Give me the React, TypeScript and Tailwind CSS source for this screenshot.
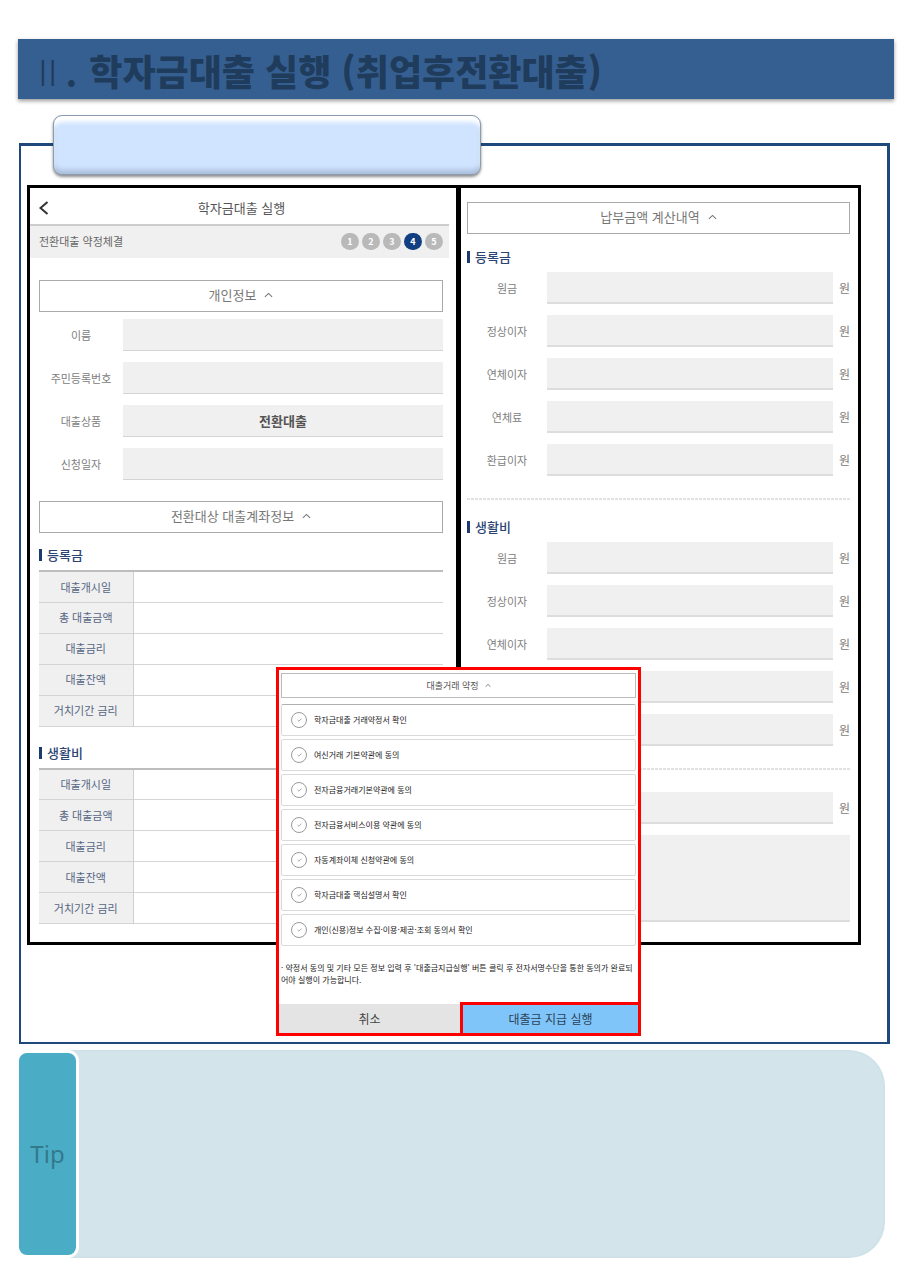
import type { ReactNode } from "react";

const profileFields = [
  { id: "name", label: "이름", value: "" },
  { id: "rrn", label: "주민등록번호", value: "" },
  { id: "product", label: "대출상품", value: "전환대출" },
  { id: "date", label: "신청일자", value: "" },
];

const accountRows = ["대출개시일", "총 대출금액", "대출금리", "대출잔액", "거치기간 금리"];
const amountRows = ["원금", "정상이자", "연체이자", "연체료", "환급이자"];

const agreements = [
  "학자금대출 거래약정서 확인",
  "여신거래 기본약관에 동의",
  "전자금융거래기본약관에 동의",
  "전자금융서비스이용 약관에 동의",
  "자동계좌이체 신청약관에 동의",
  "학자금대출 핵심설명서 확인",
  "개인(신용)정보 수집·이용·제공·조회 동의서 확인",
];

function Caret({ className }: { className: string }) {
  return (
    <svg viewBox="0 0 10 6" className={className} fill="none" stroke="currentColor" strokeWidth="1.2" aria-hidden="true">
      <path d="M1 5 5 1.2 9 5" />
    </svg>
  );
}

function SectionToggle({ children }: { children: ReactNode }) {
  return (
    <button
      type="button"
      className="flex h-8 w-full items-center justify-center gap-2 border border-[#aaaaaa] bg-white pb-[2px] text-[13px] text-[#777777]"
    >
      {children}
      <Caret className="h-[6px] w-[9px]" />
    </button>
  );
}

function SubTitle({ children }: { children: ReactNode }) {
  return (
    <h3 className="flex h-4 items-center gap-[5px] text-[13px] font-medium text-[#2b4474]">
      <span className="h-3 w-[3px] bg-[#1c3a70]" />
      {children}
    </h3>
  );
}

function DashedRule() {
  return (
    <hr className="mt-[22px] h-[2px] border-0 bg-[repeating-linear-gradient(90deg,#e2e2e2_0_3px,#ffffff_3px_4px)]" />
  );
}

function AccountTable({ title }: { title: string }) {
  return (
    <table aria-label={title} className="w-full border-collapse border-t-2 border-[#bdbdbd] text-[11px]">
      <tbody>
        {accountRows.map((row) => (
          <tr key={row} className="h-[31px] border-b border-[#d4d4d4]">
            <th scope="row" className="w-[94px] border-r border-[#cfcfcf] bg-[#f0f0f0] p-0 font-normal text-[#566683]">
              {row}
            </th>
            <td className="p-0" />
          </tr>
        ))}
      </tbody>
    </table>
  );
}

function AmountField({ id, label }: { id: string; label: string }) {
  return (
    <div className="flex h-8 items-center">
      <label htmlFor={id} className="w-20 shrink-0 text-center text-[11px] text-[#808080]">
        {label}
      </label>
      <input id={id} readOnly className="h-8 min-w-0 flex-1 border-b-2 border-[#dddddd] bg-[#f0f0f0] px-2 text-right outline-none" />
      <span className="w-[17px] shrink-0 text-right text-[12px] text-[#808080]">원</span>
    </div>
  );
}

function AmountGroup({ prefix }: { prefix: string }) {
  return (
    <div className="flex flex-col gap-[11px]">
      {amountRows.map((row, i) => (
        <AmountField key={row} id={`${prefix}-${i}`} label={row} />
      ))}
    </div>
  );
}

function ContractScreen() {
  return (
    <section className="border-y-[3px] border-r-2 border-l-[3px] border-black bg-white pb-[18px]">
      <div className="pr-[7px]">
        <header className="flex h-[38px] items-center border-b-2 border-[#cccccc] px-[9px] pt-[3px]">
          <button type="button" aria-label="뒤로" className="flex w-4 text-[#333333]">
            <svg viewBox="0 0 10 14" className="h-[14px] w-[10px]" fill="none" stroke="currentColor" strokeWidth="2" aria-hidden="true">
              <path d="M8.5 1 1.5 7l7 6" />
            </svg>
          </button>
          <h2 className="flex-1 pr-3 text-center text-[13px] text-[#555555]">학자금대출 실행</h2>
        </header>
        <div className="flex h-8 items-center justify-between bg-[#f0f0f0] pr-[6px] pb-[2px] pl-[9px]">
          <span className="text-[11px] text-[#666666]">전환대출 약정체결</span>
          <ol className="flex gap-[3px] text-[9px] font-bold text-white">
            {[1, 2, 3, 4, 5].map((n) => (
              <li
                key={n}
                className={`flex h-[17px] w-[18px] items-center justify-center rounded-full leading-none ${n === 4 ? "bg-[#123f82]" : "bg-[#b9b9b9]"}`}
              >
                {n}
              </li>
            ))}
          </ol>
        </div>
      </div>
      <div className="pt-[22px] pr-[13px] pl-[9px]">
        <SectionToggle>개인정보</SectionToggle>
        <div className="mt-[7px] flex flex-col gap-[11px]">
          {profileFields.map((f) => (
            <div key={f.id} className="flex h-8 items-center">
              <label htmlFor={f.id} className="w-[84px] shrink-0 text-center text-[11px] text-[#808080]">
                {f.label}
              </label>
              <input
                id={f.id}
                readOnly
                defaultValue={f.value}
                className="h-8 min-w-0 flex-1 border-b border-[#d4d4d4] bg-[#f0f0f0] text-center text-[13px] font-bold text-[#555555] outline-none"
              />
            </div>
          ))}
        </div>
        <div className="mt-[21px]">
          <SectionToggle>전환대상 대출계좌정보</SectionToggle>
        </div>
        <div className="mt-[14px] mb-[7px]">
          <SubTitle>등록금</SubTitle>
        </div>
        <AccountTable title="등록금" />
        <div className="mt-[18px] mb-[7px]">
          <SubTitle>생활비</SubTitle>
        </div>
        <AccountTable title="생활비" />
      </div>
    </section>
  );
}

function PaymentScreen() {
  return (
    <section className="border-[3px] border-black bg-white px-[6px] pt-[14px] pr-[8px]">
      <SectionToggle>납부금액 계산내역</SectionToggle>
      <div className="mt-[15px] mb-[7px]">
        <SubTitle>등록금</SubTitle>
      </div>
      <AmountGroup prefix="tuition" />
      <DashedRule />
      <div className="mt-[19px] mb-[7px]">
        <SubTitle>생활비</SubTitle>
      </div>
      <AmountGroup prefix="living" />
      <DashedRule />
      <div className="mt-[22px]">
        <AmountField id="total" label="합계" />
      </div>
      <textarea
        readOnly
        aria-label="안내"
        className="mt-[11px] block h-[87px] w-full resize-none border-b-2 border-[#dddddd] bg-[#f0f0f0] outline-none"
      />
    </section>
  );
}

function AgreementPanel() {
  return (
    <section className="absolute top-[521px] left-[255px] w-[365px] border-[3px] border-[#ff0000] bg-white">
      <div className="px-[2px] pt-[3px]">
        <button
          type="button"
          className="flex h-[25px] w-full items-center justify-center gap-[6px] border border-[#bbbbbb] text-[9px] text-[#555555]"
        >
          대출거래 약정
          <Caret className="h-[5px] w-[6px]" />
        </button>
        <ul className="mt-[6px] flex flex-col gap-[3px]">
          {agreements.map((text) => (
            <li key={text} className="group">
              <label className="flex h-8 items-center gap-[7px] rounded-[2px] border border-[#dadada] pl-[9px] text-[8px] text-[#222222] group-first:border-t-[#b0b0b0]">
                <span className="grid h-4 w-4 place-items-center">
                  <input
                    type="checkbox"
                    className="col-start-1 row-start-1 h-4 w-4 appearance-none rounded-full border border-[#9a9a9a]"
                  />
                  <svg viewBox="0 0 6 5" className="pointer-events-none col-start-1 row-start-1 h-[4px] w-[5px]" fill="none" stroke="#888888" strokeWidth="0.9" aria-hidden="true">
                    <path d="m0.6 2.4 1.7 1.6L5.4 0.8" />
                  </svg>
                </span>
                {text}
              </label>
            </li>
          ))}
        </ul>
        <p className="mt-4 h-10 text-[8px] leading-3 text-[#222222]">
          · 약정서 동의 및 기타 모든 정보 입력 후 '대출금지급실행' 버튼 클릭 후 전자서명수단을 통한 동의가 완료되어야 실행이 가능합니다.
        </p>
      </div>
      <div className="grid grid-cols-[181fr_178fr] items-end text-[12px] text-[#444444]">
        <button type="button" className="h-[29px] bg-[#e4e4e4]">
          취소
        </button>
        <button type="button" className="h-[31px] border-t-[3px] border-l-[3px] border-[#ff0000] bg-[#80c5f9] text-[#2c4257]">
          대출금 지급 실행
        </button>
      </div>
    </section>
  );
}

export default function App() {
  return (
    <main lang="ko" className="bg-white pt-[39px] pb-2 font-['Noto_Sans_CJK_KR',sans-serif]">
      <header className="mr-5 ml-[18px] flex h-[60px] items-center bg-[#365f91] pt-[2px] pl-5 shadow-[0_2px_4px_rgba(0,0,0,0.4)]">
        <h1 className="flex items-baseline text-[36px] leading-none font-black whitespace-nowrap text-[#1f3c5c]">
          <span className="mr-2 font-light">II</span>
          <span className="mr-3 font-bold">.</span>
          <span>학자금대출 실행 (취업후전환대출)</span>
        </h1>
      </header>

      <div className="relative mt-11 mr-6 ml-[19px] border-t-[3px] border-r-[3px] border-b-2 border-l-2 border-[#1f497d] pt-[39px] pr-[26px] pb-[97px] pl-[6px]">
        <div className="absolute -top-[31px] left-8 h-[60px] w-[428px] rounded-[9px] border border-[#8d9bb0] bg-[#d0e4ff] shadow-[inset_0_7px_4px_-1px_#ffffff,inset_0_-5px_5px_-1px_#a9bedb,0_2px_3px_rgba(0,0,0,0.45)]" />
        <div className="grid grid-cols-[431fr_403fr]">
          <ContractScreen />
          <PaymentScreen />
        </div>
        <AgreementPanel />
      </div>

      <aside className="mt-[6px] mr-[29px] ml-4 flex h-[208px]">
        <div className="relative z-10 flex w-[63px] items-center justify-center rounded-[11px] border-[3px] border-white bg-[#4bacc6] font-['Noto_Sans',sans-serif] text-[24px] text-[#33798c]">
          Tip
        </div>
        <div className="-ml-[9px] flex-1 rounded-r-[36px] border-y-2 border-r-2 border-[#d0e2e9] bg-[#d3e4eb]" />
      </aside>
    </main>
  );
}
